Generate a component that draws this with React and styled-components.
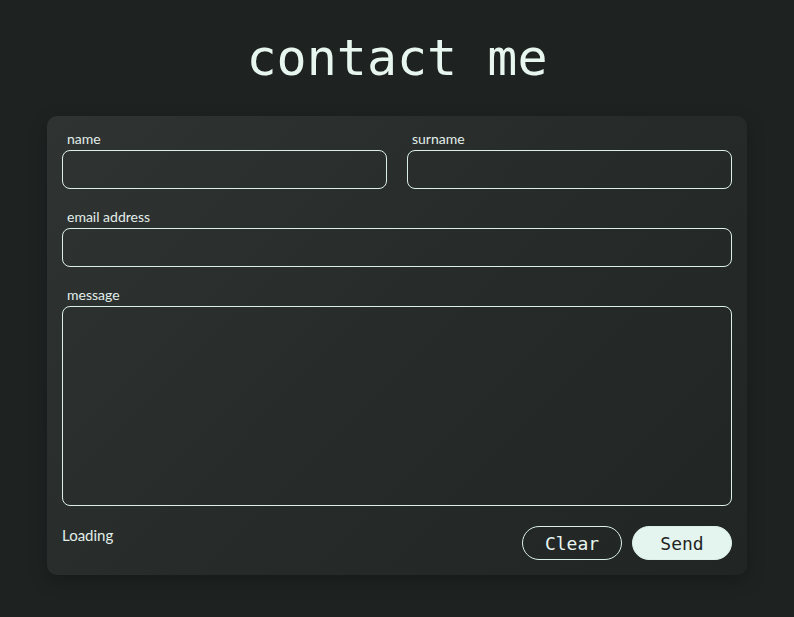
import React from "react";
import styled, { createGlobalStyle } from "styled-components";

const Global = createGlobalStyle`
  html, body { margin: 0; padding: 0; background: #1e2322; }
  body { font-family: Lato, "Liberation Sans", sans-serif; }
  * { box-sizing: border-box; }
`;

const Page = styled.main`
  min-height: 617px;
  display: flex;
  flex-direction: column;
  align-items: center;
  padding-top: 23px;
`;

const Title = styled.h1`
  margin: 0 0 23px;
  height: 70px;
  font-family: "DejaVu Sans Mono", monospace;
  font-weight: 400;
  font-size: 50px;
  line-height: 70px;
  color: #e8f6f0;
`;

const Card = styled.form`
  width: 700px;
  padding: 15px;
  border-radius: 10px;
  background: linear-gradient(135deg, #2f3433 0%, #262b2a 55%, #212625 100%);
  box-shadow: 0 6px 18px rgba(0, 0, 0, 0.25);
  display: flex;
  flex-direction: column;
  gap: 20px;
`;

const Row = styled.div`
  display: grid;
  grid-template-columns: ${(p) => (p.$cols === 2 ? "1fr 1fr" : "1fr")};
  column-gap: 20px;
`;

const Field = styled.label`
  display: flex;
  flex-direction: column;
`;

const Label = styled.span`
  padding-left: 5px;
  height: 19px;
  font-size: 14px;
  line-height: 15px;
  color: #e2eee9;
`;

const Input = styled.input`
  height: 39px;
  border: 1px solid #dcefe7;
  border-radius: 8px;
  background: transparent;
  color: #e8f6f0;
  padding: 0 10px;
  font-size: 14px;
  outline: none;
`;

const TextArea = styled.textarea`
  height: 200px;
  border: 1px solid #dcefe7;
  border-radius: 8px;
  background: transparent;
  color: #e8f6f0;
  padding: 10px;
  resize: none;
  outline: none;
`;

const Footer = styled.div`
  display: flex;
  align-items: flex-start;
  justify-content: space-between;
`;

const Status = styled.span`
  font-size: 15px;
  line-height: 19px;
  color: #e2eee9;
`;

const Buttons = styled.div`
  display: flex;
  gap: 10px;
`;

const Button = styled.button`
  width: 100px;
  height: 34px;
  border-radius: 17px;
  border: 1px solid #dcefe7;
  font-family: "DejaVu Sans Mono", monospace;
  font-size: 18px;
  cursor: pointer;
  background: ${(p) => (p.$primary ? "#e3f5ee" : "transparent")};
  color: ${(p) => (p.$primary ? "#1f2423" : "#e8f6f0")};
`;

export default function App() {
  return (
    <>
      <Global />
      <Page>
        <Title>contact me</Title>
        <Card onSubmit={(e) => e.preventDefault()}>
          <Row $cols={2}>
            <Field>
              <Label>name</Label>
              <Input type="text" />
            </Field>
            <Field>
              <Label>surname</Label>
              <Input type="text" />
            </Field>
          </Row>
          <Row>
            <Field>
              <Label>email address</Label>
              <Input type="email" />
            </Field>
          </Row>
          <Row>
            <Field>
              <Label>message</Label>
              <TextArea />
            </Field>
          </Row>
          <Footer>
            <Status>Loading</Status>
            <Buttons>
              <Button type="reset">Clear</Button>
              <Button type="submit" $primary>Send</Button>
            </Buttons>
          </Footer>
        </Card>
      </Page>
    </>
  );
}
